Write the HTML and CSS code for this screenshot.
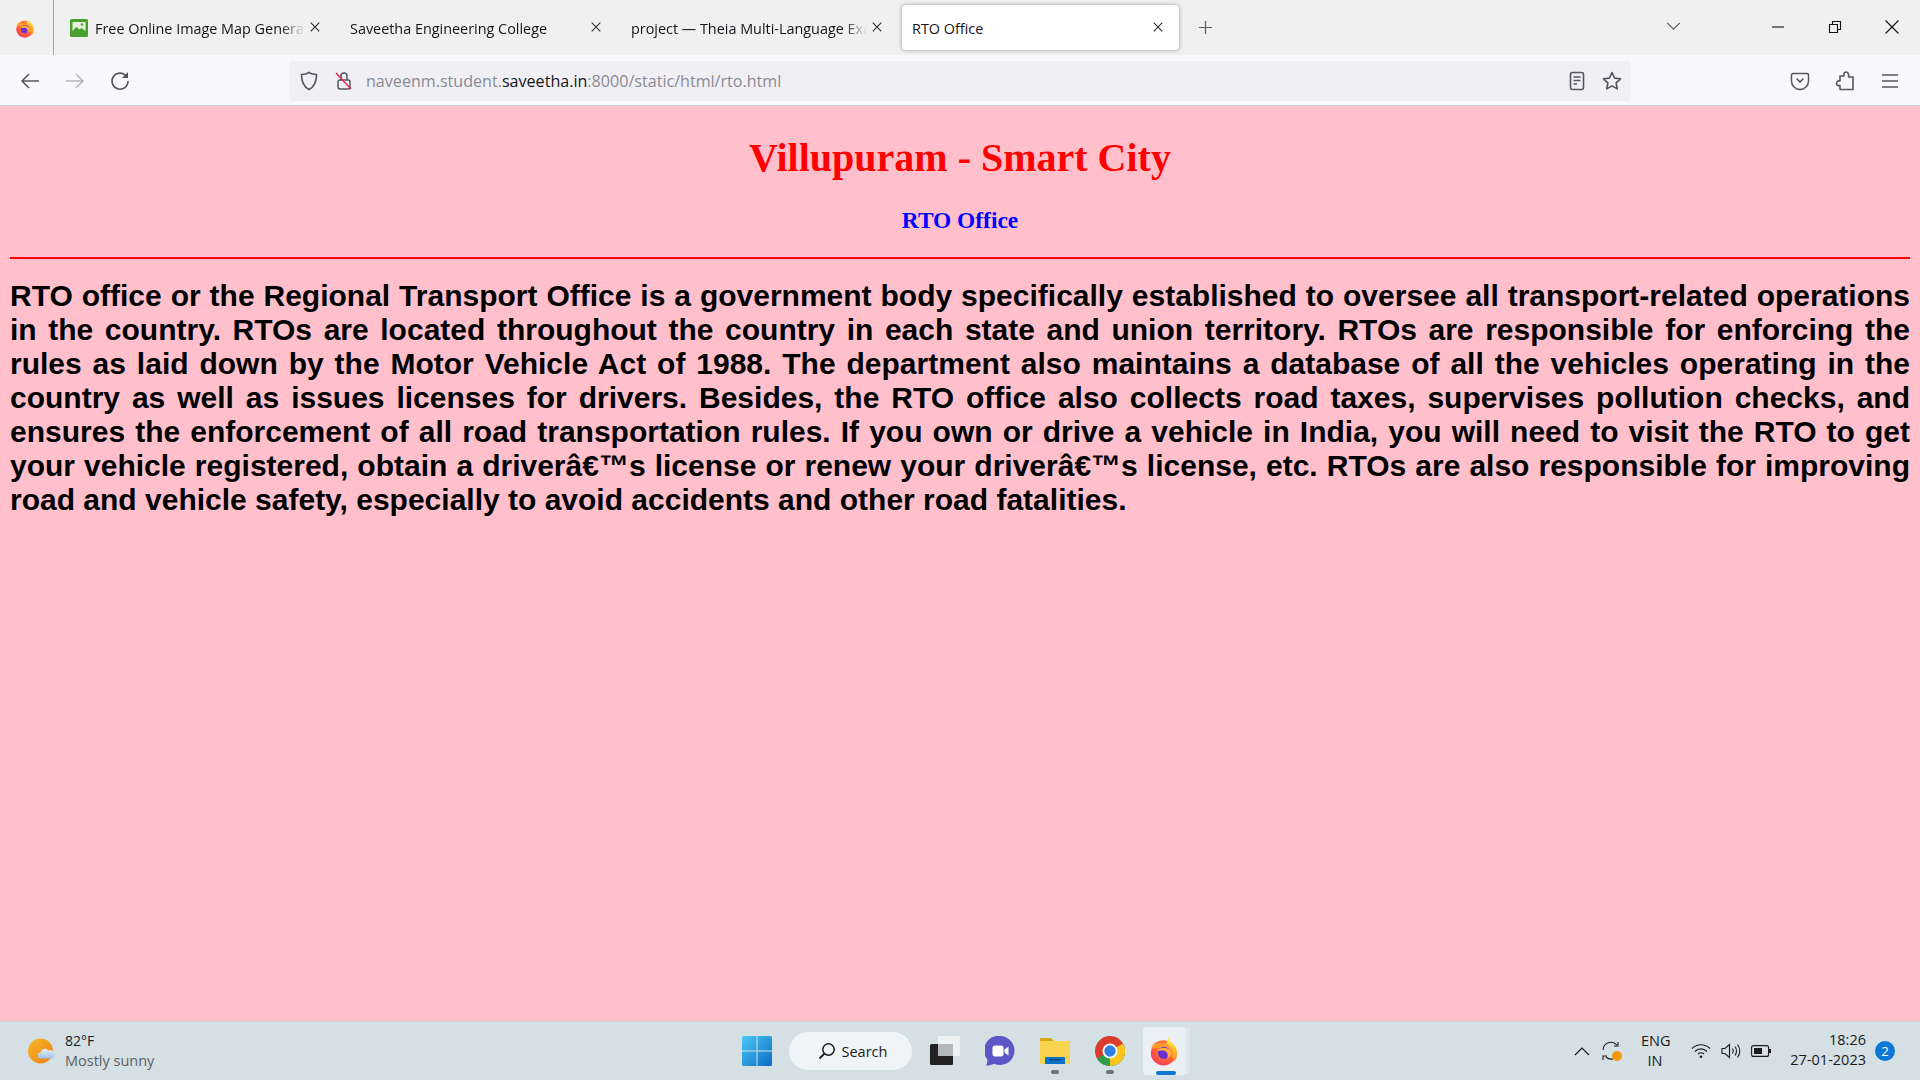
FILE: index.html
```html
<!DOCTYPE html>
<html lang="en">
<head>
    <meta charset="UTF-8">
    <meta name="viewport" content="width=device-width, initial-scale=1.0">
    <title>RTO Office</title>
    <link rel="stylesheet" href="styles.css">
</head>
<body>
    <svg class="defs" width="0" height="0">
        <defs>
            <radialGradient id="foxBody" cx="0.6" cy="0.35" r="0.8">
                <stop offset="0" stop-color="#ffa436"/>
                <stop offset="0.6" stop-color="#ff5a3c"/>
                <stop offset="1" stop-color="#f0267a"/>
            </radialGradient>
            <linearGradient id="foxFlame" x1="0" y1="0" x2="0" y2="1">
                <stop offset="0" stop-color="#fff44f"/>
                <stop offset="0.6" stop-color="#ffb52e"/>
                <stop offset="1" stop-color="#ff8a2e"/>
            </linearGradient>
            <symbol id="firefox" viewBox="0 0 32 32">
                <circle cx="15.500" cy="18" r="13.500" fill="url(#foxBody)"/>
                <path fill="url(#foxFlame)" d="M21 1c0 5 6 7 8 12 2 5 1 11-2 14L18 10z"/>
                <path fill="#ffb03a" d="M5 7C4 9 3 11 2.500 14L8 10z"/>
                <path fill="#ff9a2e" d="M3 13C6 7 14 6 20 9c5 3 7 8 5 13-1-7-7-11-13-9z"/>
                <circle cx="16" cy="18" r="6.500" fill="#6b2fd0"/>
                <path fill="#ffb03a" d="M9 16c2-4 9-5 13-1 2 3 1 8-3 9 2-3 1-7-2-8-3-1-6 0-8 0z"/>
            </symbol>
            <symbol id="close" viewBox="0 0 14 14">
                <path d="M2 2l10 10M12 2L2 12" fill="none" stroke="currentColor" stroke-width="1.2"/>
            </symbol>
        </defs>
    </svg>

    <header class="browser">
        <div class="tabbar">
            <div class="appmenu"><svg class="fox-small"><use href="#firefox"/></svg></div>
            <div class="tab tab-first">
                <svg class="favicon" viewBox="0 0 18 18">
                    <rect width="18" height="18" rx="1.500" fill="#4aa02c"/>
                    <rect x="2.500" y="3" width="13" height="9" fill="#e8f3df"/>
                    <path d="M2.500 12l4-4 3 2.500 2-1.500 4 3z" fill="#4aa02c"/>
                    <circle cx="12" cy="5.500" r="1.200" fill="#4aa02c"/>
                </svg>
                <span class="tab-title">Free Online Image Map Generat</span>
                <svg class="tab-close"><use href="#close"/></svg>
            </div>
            <div class="tab">
                <span class="tab-title">Saveetha Engineering College</span>
                <svg class="tab-close"><use href="#close"/></svg>
            </div>
            <div class="tab">
                <span class="tab-title">project — Theia Multi-Language Exa</span>
                <svg class="tab-close"><use href="#close"/></svg>
            </div>
            <div class="tab tab-active">
                <span class="tab-title">RTO Office</span>
                <svg class="tab-close"><use href="#close"/></svg>
            </div>
            <svg class="new-tab" viewBox="0 0 16 16"><path d="M8 1v14M1 8h14" fill="none" stroke="#5b5b66" stroke-width="1.300"/></svg>
            <svg class="tab-list" viewBox="0 0 16 10"><path d="M1 1l7 7 7-7" fill="none" stroke="#5b5b66" stroke-width="1.400"/></svg>
            <div class="winctl">
                <svg viewBox="0 0 14 14"><path d="M1 7h12" stroke="#111" stroke-width="1.100"/></svg>
                <svg viewBox="0 0 14 14"><path d="M1.500 4.500h8v8h-8zM4.500 4.500v-3h8v8h-3" fill="none" stroke="#111" stroke-width="1.100"/></svg>
                <svg viewBox="0 0 14 14"><path d="M0.500 0.500l13 13M13.500 0.500l-13 13" fill="none" stroke="#111" stroke-width="1.100"/></svg>
            </div>
        </div>
        <nav class="navbar">
            <svg class="navicon" viewBox="0 0 20 20"><path d="M19 10H2M9 3l-7 7 7 7" fill="none" stroke="#55555f" stroke-width="1.500"/></svg>
            <svg class="navicon" viewBox="0 0 20 20"><path d="M1 10h17M11 3l7 7-7 7" fill="none" stroke="#b4b4ba" stroke-width="1.500"/></svg>
            <svg class="navicon" viewBox="0 0 20 20"><path d="M16.500 5.500A8 8 0 1 0 18 10" fill="none" stroke="#55555f" stroke-width="1.600"/><path d="M18 1v6h-6z" fill="#55555f"/></svg>
            <div class="urlbar">
                <svg class="navicon" viewBox="0 0 20 20"><path d="M10 1.500c2 1.500 4.500 2 7.500 2 0 7-1.500 12-7.500 15-6-3-7.500-8-7.500-15 3 0 5.500-.5 7.500-2z" fill="none" stroke="#55555f" stroke-width="1.600"/></svg>
                <svg class="navicon lock" viewBox="0 0 20 20">
                    <rect x="4" y="9" width="12" height="9" rx="2" fill="none" stroke="#55555f" stroke-width="1.500"/>
                    <path d="M7 9V5a3 3 0 0 1 6 0v4" fill="none" stroke="#55555f" stroke-width="1.500"/>
                    <path d="M2 2l15 16" stroke="#e22850" stroke-width="1.500"/>
                </svg>
                <div class="url">naveenm.student.<b>saveetha.in</b>:8000/static/html/rto.html</div>
                <svg class="navicon" viewBox="0 0 20 20"><rect x="3.500" y="1.500" width="13" height="17" rx="2" fill="none" stroke="#55555f" stroke-width="1.600"/><path d="M6.500 6h7M6.500 9.500h7M6.500 13h3.500" stroke="#55555f" stroke-width="1.400"/></svg>
                <svg class="navicon" viewBox="0 0 20 20"><path d="M10 1.500l2.600 5.600 6 .7-4.500 4.100 1.200 6-5.300-3-5.300 3 1.200-6L1.400 7.800l6-.7z" fill="none" stroke="#55555f" stroke-width="1.600" stroke-linejoin="round"/></svg>
            </div>
            <svg class="navicon" viewBox="0 0 20 20"><path d="M3 2.500h14a1.500 1.500 0 0 1 1.500 1.500v6a8.500 8.500 0 0 1-17 0V4A1.500 1.500 0 0 1 3 2.500z" fill="none" stroke="#55555f" stroke-width="1.500"/><path d="M6.500 7.500l3.500 3.500 3.500-3.500" fill="none" stroke="#55555f" stroke-width="1.600"/></svg>
            <svg class="navicon" viewBox="0 0 20 20"><path d="M11 1c-2 0-2.500 2-2 4H5v5c-2.500-.5-3.500 1-3.500 2.500S3 15 5 14.500V18.500h13V6h-4.500c.5-2 0-5-2.500-5z" fill="none" stroke="#55555f" stroke-width="1.600" stroke-linejoin="round"/></svg>
            <svg class="navicon" viewBox="0 0 20 20"><path d="M2 4h16M2 10h16M2 16h16" stroke="#55555f" stroke-width="1.500"/></svg>
        </nav>
    </header>

    <main class="page">
        <h1 class="page-title">Villupuram - Smart City</h1>
        <h2 class="page-sub">RTO Office</h2>
        <div class="rule"></div>
        <p class="page-text">RTO office or the Regional Transport Office is a government body specifically established to oversee all transport-related operations in the country. RTOs are located throughout the country in each state and union territory. RTOs are responsible for enforcing the rules as laid down by the Motor Vehicle Act of 1988. The department also maintains a database of all the vehicles operating in the country as well as issues licenses for drivers. Besides, the RTO office also collects road taxes, supervises pollution checks, and ensures the enforcement of all road transportation rules. If you own or drive a vehicle in India, you will need to visit the RTO to get your vehicle registered, obtain a driverâ€™s license or renew your driverâ€™s license, etc. RTOs are also responsible for improving road and vehicle safety, especially to avoid accidents and other road fatalities.</p>
    </main>

    <footer class="taskbar">
        <div class="weather">
            <svg class="weather-icon" viewBox="0 0 28 26">
                <defs>
                    <linearGradient id="sun" x1="0" y1="0" x2="1" y2="1">
                        <stop offset="0" stop-color="#f9b928"/>
                        <stop offset="1" stop-color="#ee7d14"/>
                    </linearGradient>
                    <linearGradient id="cloud" x1="0" y1="0" x2="0" y2="1">
                        <stop offset="0" stop-color="#e8f0fb"/>
                        <stop offset="1" stop-color="#9fbfe9"/>
                    </linearGradient>
                </defs>
                <circle cx="12.500" cy="13" r="12.500" fill="url(#sun)"/>
                <path d="M13 20.500a3 3 0 0 1-.5-6 4.500 4.500 0 0 1 8-2 4 4 0 0 1 3.500 8z" fill="url(#cloud)"/>
            </svg>
            <div>
                <div class="temp">82°F</div>
                <div class="cond">Mostly sunny</div>
            </div>
        </div>

        <div class="tray-center">
            <svg class="start" viewBox="0 0 30 30">
                <defs>
                    <linearGradient id="win" x1="0" y1="0" x2="1" y2="1">
                        <stop offset="0" stop-color="#4cc9f5"/>
                        <stop offset="1" stop-color="#0a6cc4"/>
                    </linearGradient>
                </defs>
                <rect width="30" height="30" rx="1.500" fill="url(#win)"/>
                <path d="M14.500 0h1v30h-1zM0 14.500h30v1H0z" fill="#d4dfe3"/>
            </svg>
            <div class="search">
                <svg class="search-icon" viewBox="0 0 18 18"><circle cx="10.500" cy="7.500" r="5.700" fill="none" stroke="#1c1c1c" stroke-width="1.500"/><path d="M6.500 11.500L1.500 16.500" stroke="#1c1c1c" stroke-width="1.800"/></svg>
                <span>Search</span>
            </div>
            <svg class="task-icon" viewBox="0 0 30 30">
                <rect x="0" y="8" width="23" height="21" rx="1.500" fill="#222"/>
                <rect x="8" y="0" width="22" height="20" rx="1" fill="#f2f5f6" fill-opacity=".85"/>
                <rect x="8" y="8" width="15" height="12" fill="#b5b8ba"/>
            </svg>
            <svg class="task-icon" viewBox="0 0 30 30">
                <path d="M15 0a14.500 14.500 0 1 1-6 27.700C7 28.800 4 29.500 1 29.500c1-1.500 1.500-3.500 1.300-6A14.500 14.500 0 0 1 15 0z" fill="#5b57c6"/>
                <rect x="7.500" y="9.500" width="11" height="11" rx="2.500" fill="#fff"/>
                <path d="M19.500 13.500l4-3v9l-4-3z" fill="#fff"/>
            </svg>
            <div class="app-cell">
                <svg class="task-icon" viewBox="0 0 30 30">
                    <path d="M0 3a1 1 0 0 1 1-1h10l3 3H0z" fill="#dba514"/>
                    <path d="M0 5h30v22a1 1 0 0 1-1 1H1a1 1 0 0 1-1-1z" fill="#fbd44f"/>
                    <path d="M5 28v-6a1 1 0 0 1 1-1h18a1 1 0 0 1 1 1v6z" fill="#0c72c8"/>
                    <rect x="9" y="23" width="12" height="1.500" fill="#08487f"/>
                </svg>
                <span class="running"></span>
            </div>
            <div class="app-cell">
                <svg class="task-icon" viewBox="0 0 30 30">
                    <circle cx="15" cy="15" r="15" fill="#da3b2f"/>
                    <path d="M15 15L2 22.500A15 15 0 0 0 15 30z" fill="#2f9e48"/>
                    <path d="M15 15L15 30A15 15 0 0 0 28 7.500z" fill="#2f9e48"/>
                    <path d="M15 15L28 7.500A15 15 0 0 1 15 30z" fill="#fbc51b"/>
                    <circle cx="15" cy="15" r="7.500" fill="#fff"/>
                    <circle cx="15" cy="15" r="5.700" fill="#2f7fe6"/>
                </svg>
                <span class="running"></span>
            </div>
            <div class="firefox-tile">
                <svg class="fox-large"><use href="#firefox"/></svg>
                <span class="active-bar"></span>
            </div>
        </div>

        <div class="tray-right">
            <svg class="chevron" viewBox="0 0 16 9"><path d="M1 8l7-7 7 7" fill="none" stroke="#1c1c1c" stroke-width="1.200"/></svg>
            <svg class="sync" viewBox="0 0 20 20">
                <path d="M1 9a8 8 0 0 1 14-5M16 1v4h-4" fill="none" stroke="#1c1c1c" stroke-width="1.100"/>
                <path d="M11 18a8 8 0 0 1-7-2M1 19v-4h4" fill="none" stroke="#1c1c1c" stroke-width="1.100"/>
                <circle cx="15" cy="15" r="5" fill="#f59b0b"/>
            </svg>
            <div class="lang">ENG<br>IN</div>
            <svg class="tray-icon" viewBox="0 0 20 16"><path d="M1 5.500c5-5 13-5 18 0M4 8.500c3.500-3.500 8.500-3.500 12 0M7 11c1.700-1.700 4.300-1.700 6 0" fill="none" stroke="#1c1c1c" stroke-width="1.200"/><circle cx="10" cy="13.800" r="1.300" fill="#1c1c1c"/></svg>
            <svg class="tray-icon" viewBox="0 0 20 16"><path d="M1 5.500h3l4.500-4v13L4 10.500H1z" fill="none" stroke="#1c1c1c" stroke-width="1.100"/><path d="M11.500 5.500c1 1.500 1 3.500 0 5M14 3.500c2 2.500 2 6.500 0 9M16.500 1.500c3 3.500 3 9.500 0 13" fill="none" stroke="#1c1c1c" stroke-width="1.100"/></svg>
            <svg class="tray-icon" viewBox="0 0 20 16"><rect x=".6" y="2.600" width="17" height="10.800" rx="2" fill="none" stroke="#1c1c1c" stroke-width="1.100"/><rect x="3" y="5" width="8" height="6" fill="#1c1c1c"/><rect x="18" y="6" width="2" height="4" fill="#1c1c1c"/></svg>
            <div class="clock">18:26<br>27-01-2023</div>
            <div class="notif">2</div>
        </div>
    </footer>
</body>
</html>
```

FILE: styles.css
```css
* {
    box-sizing: border-box;
}
html, body {
    height: 100%;
}
body {
    display: flex;
    flex-direction: column;
    height: 1080px;
    margin: 0;
    overflow: hidden;
    background-color: pink;
    font-family: "Open Sans", "Noto Sans", sans-serif;
}
svg {
    display: block;
    flex: none;
}
.defs {
    position: absolute;
}

/* browser chrome */
.tabbar {
    display: flex;
    align-items: center;
    height: 55px;
    background-color: #f0f0f0;
}
.appmenu {
    display: flex;
    align-items: center;
    width: 54px;
    height: 55px;
    padding-left: 15px;
    border-right: 1px solid #a8a8a8;
}
.fox-small {
    width: 20px;
    height: 20px;
}
.tab {
    display: flex;
    align-items: center;
    width: 277px;
    height: 45px;
    margin-right: 4px;
    padding-left: 10px;
    font-size: 14.4px;
    color: #15141a;
}
.tab-first {
    margin-left: 5px;
}
.favicon {
    width: 18px;
    height: 18px;
    margin: 0 7px 0 1px;
}
.tab-title {
    flex: 1;
    min-width: 0;
    padding-top: 1px;
    white-space: nowrap;
    -webkit-mask-image: linear-gradient(to left, transparent 0, #000 24px);
    mask-image: linear-gradient(to left, transparent 0, #000 24px);
}
.tab-close {
    width: 12px;
    height: 12px;
    margin: -2px 15px 0 4px;
    color: #2a2a30;
}
.tab-active {
    background-color: #fff;
    border-radius: 4px;
    box-shadow: 0 0 4px rgba(0, 0, 0, 0.35);
}
.tab-active .tab-title {
    -webkit-mask-image: none;
    mask-image: none;
}
.new-tab {
    width: 15px;
    height: 15px;
    margin-left: 15px;
}
.tab-list {
    width: 15px;
    height: 9px;
    margin: -2px 0 0 453px;
}
.winctl {
    display: flex;
    align-items: center;
    gap: 43px;
    margin: -2px 0 0 auto;
    padding-right: 21px;
}
.winctl svg {
    width: 14px;
    height: 14px;
}
.navbar {
    display: flex;
    align-items: center;
    gap: 25px;
    height: 51px;
    padding: 1px 0 0 20px;
    background-color: #f9f9fb;
    border-bottom: 1px solid #cfcfd4;
}
.navicon {
    width: 20px;
    height: 20px;
}
.urlbar {
    display: flex;
    align-items: center;
    gap: 15px;
    width: 1342px;
    height: 40px;
    margin: 0 134px;
    padding: 0 9px 0 10px;
    background-color: #f0f0f4;
    border-radius: 4px;
}
.url {
    flex: 1;
    margin-left: -3px;
    padding-top: 1px;
    font-size: 16.1px;
    color: #8a8a92;
    white-space: nowrap;
}
.url b {
    font-weight: 400;
    color: #15141a;
}

/* page content */
.page {
    flex: 1;
    padding: 0 10px;
    background-color: pink;
}
.page-title {
    margin: 28px 0 0;
    font-family: "Liberation Serif", serif;
    font-size: 40px;
    text-align: center;
    color: #ff0000;
}
.page-sub {
    margin: 26px 0 0;
    font-family: "Liberation Serif", serif;
    font-size: 23.4px;
    text-align: center;
    color: #0000ff;
}
.rule {
    height: 2px;
    margin-top: 23px;
    background-color: #ff0000;
}
.page-text {
    margin: 20px 0 0;
    font-family: "Liberation Sans", Arial, sans-serif;
    font-size: 30px;
    font-weight: 700;
    line-height: 34px;
    text-align: justify;
    color: #000;
}

/* windows taskbar */
.taskbar {
    display: grid;
    grid-template-columns: 1fr auto 1fr;
    align-items: center;
    height: 59px;
    background-color: #d5e0e4;
    border-top: 1px solid #c6d2d6;
    font-size: 14.5px;
    color: #1c1c1c;
}
.weather {
    display: flex;
    align-items: center;
    gap: 9px;
    padding-left: 28px;
    line-height: 20px;
}
.weather-icon {
    width: 28px;
    height: 26px;
}
.temp {
    font-size: 14px;
}
.cond {
    color: #5a5f63;
}
.tray-center {
    display: flex;
    align-items: center;
    margin-left: 7px;
}
.start {
    width: 30px;
    height: 30px;
}
.search {
    display: flex;
    align-items: center;
    gap: 6px;
    width: 123px;
    height: 38px;
    margin: 0 18px 0 17px;
    padding-left: 29px;
    background-color: #eff4f6;
    border-radius: 19px;
}
.search-icon {
    width: 18px;
    height: 18px;
}
.task-icon {
    width: 30px;
    height: 30px;
}
.tray-center > .task-icon {
    margin-right: 25px;
}
.app-cell {
    position: relative;
    margin-right: 25px;
}
.running {
    position: absolute;
    left: 11px;
    bottom: -8px;
    width: 8px;
    height: 4px;
    background-color: #6d7478;
    border-radius: 2px;
}
.firefox-tile {
    position: relative;
    display: flex;
    align-items: center;
    justify-content: center;
    width: 43px;
    height: 48px;
    margin-left: -7px;
    background-color: #eaf0f3;
    border-radius: 4px;
    box-shadow: 5px 0 0 -1px #dfe7ea;
}
.fox-large {
    width: 30px;
    height: 30px;
}
.active-bar {
    position: absolute;
    left: 13px;
    bottom: 0;
    width: 20px;
    height: 4px;
    background-color: #0a78d4;
    border-radius: 2px;
}
.tray-right {
    display: flex;
    align-items: center;
    justify-content: flex-end;
    padding-right: 25px;
    text-align: center;
    line-height: 20px;
}
.chevron {
    width: 16px;
    height: 9px;
}
.sync {
    width: 20px;
    height: 20px;
    margin: 0 19px 0 12px;
}
.lang {
    width: 28px;
    margin-right: 22px;
    white-space: nowrap;
}
.tray-icon {
    width: 20px;
    height: 16px;
    margin-right: 10px;
}
.clock {
    width: 85px;
    margin-top: -2px;
    text-align: right;
    white-space: nowrap;
}
.notif {
    width: 20px;
    height: 20px;
    margin-left: 9px;
    background-color: #0a78d4;
    border-radius: 50%;
    font-size: 13px;
    line-height: 20px;
    color: #fff;
}
```
